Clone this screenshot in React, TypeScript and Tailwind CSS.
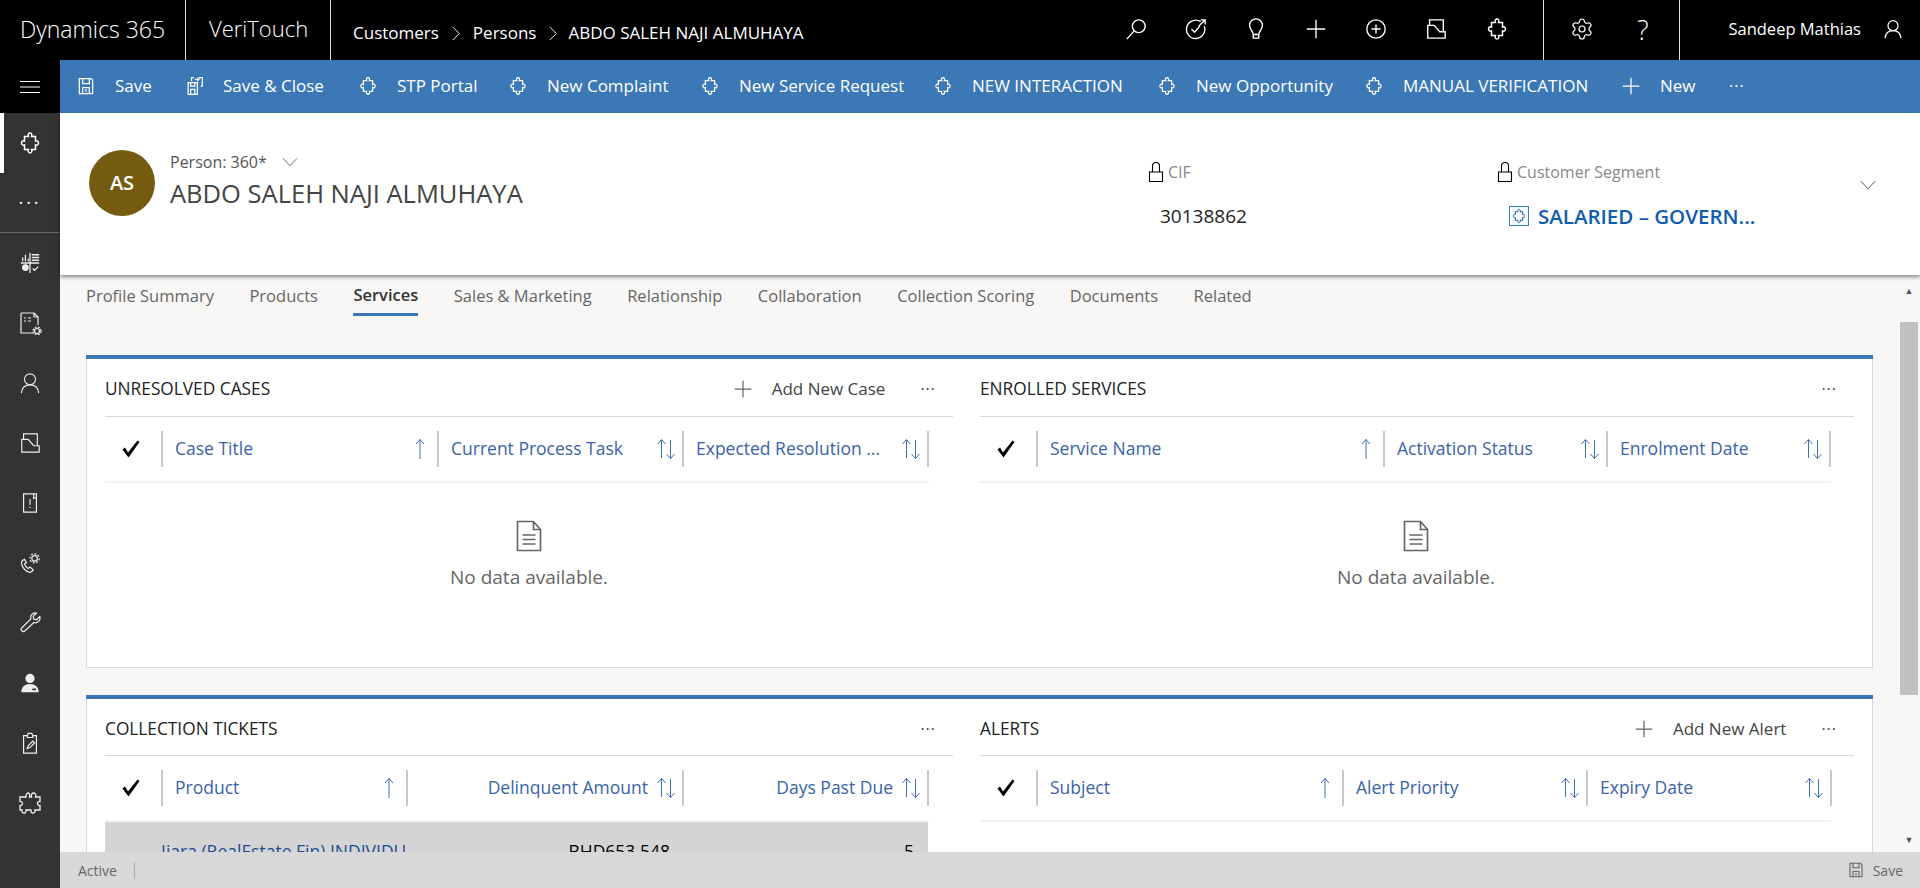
import React from 'react';
import { Settings } from 'lucide-react';

type IconProps = { className?: string };

function Svg({ className, box = '0 0 24 24', width = 1.5, children }: IconProps & { box?: string; width?: number; children: React.ReactNode }) {
  return (
    <svg viewBox={box} fill="none" stroke="currentColor" strokeWidth={width} className={className}>
      {children}
    </svg>
  );
}

const Puzzle = ({ className }: IconProps) => (
  <Svg className={className}>
    <path d="M10.400 5.500c-.8-2 .2-3.500 1.600-3.500s2.400 1.500 1.600 3.500h3.900V10c1.500-.8 3 .2 3 2s-1.500 2.800-3 2v4.500h-3.900c.8 2-.2 3.500-1.600 3.500s-2.400-1.500-1.600-3.500H6.500V14c-1.500.8-3-.2-3-2s1.500-2.800 3-2V5.500z" />
  </Svg>
);
const Save = ({ className }: IconProps) => (
  <Svg className={className}>
    <path d="M4 3h14l2 2v16H4zM8 3v6h8V3M8 21v-7h8v7M12 16v3" />
  </Svg>
);
const SaveClose = ({ className }: IconProps) => (
  <Svg className={className}>
    <path d="M5 8h11v14H5zM8 8v4h5V8M8 22v-6h5v6" />
    <path d="M9 6V2h3M20 12h2V2h-4M13 4h5M16 2l2 2-2 2" />
  </Svg>
);
const Folder = ({ className, width }: IconProps & { width?: number }) => (
  <Svg className={className} width={width}>
    <path d="M3 22V8h7l6 7h6v7zM5 8V2h15v13" />
  </Svg>
);
const PlusThin = ({ className }: IconProps) => (
  <Svg className={className}>
    <path d="M12 2v20M2 12h20" />
  </Svg>
);
const Chevron = ({ className }: IconProps) => (
  <Svg className={className} box="0 0 20 12" width={1}>
    <path d="M1.500 1.500 10 10.500l8.500-9" />
  </Svg>
);
const Crumb = () => (
  <svg viewBox="0 0 9 16" fill="none" stroke="currentColor" className="mx-[12px] h-[15px] w-[10px]">
    <path d="m1 1 7 7-7 7" />
  </svg>
);
const Lock = ({ className }: IconProps) => (
  <Svg className={className} box="0 0 16 22" width={1.1}>
    <path d="M1.500 11h13v9.500h-13zM4.500 11V5a3.500 3.500 0 0 1 7 0v6" />
  </Svg>
);
const Doc = ({ className }: IconProps) => (
  <Svg className={className} box="0 0 26 32" width={1.7}>
    <path d="M1.500 1.500h16l7 8v21h-23zM17.500 1.500v8h7M6.500 15h13M6.500 19.500h13M6.500 24h13" />
  </Svg>
);
const Check = ({ className }: IconProps) => (
  <svg viewBox="0 0 20 20" fill="currentColor" className={className}>
    <path d="M1.500 10.500 4 8.500l3 5L16.500 1.500l2 1.500L7.500 18.500z" />
  </svg>
);
const SortUp = () => (
  <svg viewBox="0 0 10 22" fill="none" stroke="#3f6fb0" className="h-[22px] w-[10px]">
    <path d="M5 21V1.500M1 6l4-4.500L9 6" />
  </svg>
);
const SortBoth = () => (
  <svg viewBox="0 0 20 22" fill="none" stroke="#3f6fb0" className="h-[22px] w-[20px]">
    <path d="M5.500 20V1.500M1.500 6l4-4.500 4 4.500M14.500 2v18.500M10.500 16l4 4.500 4-4.500" />
  </svg>
);
const User = ({ className, width }: IconProps & { width?: number }) => (
  <Svg className={className} width={width}>
    <circle cx="12" cy="8" r="6" />
    <path d="M2.500 23c.5-5.500 4-9 9.500-9s9 3.500 9.500 9" />
  </Svg>
);

const Hamburger = () => (
  <Svg className="h-[14px] w-[20px]" box="0 0 20 14" width={1.200}>
    <path d="M0 1.500h20M0 7h20M0 12.500h20" />
  </Svg>
);

const sideClass = 'h-[22px] w-[22px]';
const sideIcons: React.ReactNode[] = [
  <Svg key="a" className={sideClass} width={1.4}><path d="M2 12h20M12 1v22M4 10V6M7 10V3M10 10V7M14 3h8M14 6h8M14 9h8M15 18l2 2 4-4" /><circle cx="7" cy="17" r="3" fill="currentColor" /></Svg>,
  <Svg key="b" className="h-[24px] w-[24px]" width={1.2}><path d="M3 2h13l4 4v8M16 2v4h4M3 2v20h12M6 7h2M10 7h3M6 10h2M10 10h3" /><circle cx="19" cy="20" r="2.500" /><circle cx="19" cy="20" r="4" strokeDasharray="2 1.200" /></Svg>,
  <User key="c" className={sideClass} width={1.2} />,
  <Folder key="d" className={sideClass} width={1.3} />,
  <Svg key="e" className={sideClass} width={1.3}><path d="M5 2h14v20H5zM16 2v5l3-1M12 8v6M12 16v1.500" /></Svg>,
  <Svg key="f" className={sideClass} width={1.3}><path d="M6 8c-2.500 1-4 3-3 6 1.500 4 4.500 7 8 8 2 .5 3.500-.5 4.500-2.500l-3.500-3-2 1.500c-2-1-3.500-3-4-5l2-1.500z" /><circle cx="17" cy="7" r="3" /><circle cx="17" cy="7" r="5" strokeDasharray="2 1.800" /></Svg>,
  <Svg key="g" className={sideClass} width={1.3}><path d="M3 20.500c-1-1-1-2 0-3l10-10c-1-3 1-6.500 5-6.500l1 .3-3.500 3.500.7 3 3 .7 3.500-3.500c1.200 4-2.500 8-6.500 6.500L6 21c-1 1-2 .5-3-.5z" /></Svg>,
  <svg key="h" viewBox="0 0 24 24" fill="currentColor" className={sideClass}><circle cx="12" cy="7" r="5" /><path fillRule="evenodd" d="M2.500 22c0-6 4-9 9.500-9s9.500 3 9.500 9zM14.500 18v2h4v-2z" /></svg>,
  <Svg key="i" className={sideClass} width={1.3}><path d="M5 4h4l1-2.500h4L15 4h4v19H5zM9 4v2h6V4M9 18l1-3 5-5 2 2-5 5z" /></Svg>,
  <Svg key="j" className="h-[24px] w-[24px]" width={1.3}><path d="M8 6c-.5-3 1.500-4 2.500-4S12 3.500 11.500 6h2c-.5-2.500.500-4 2-4s3 1.500 2 4h4.500v4.500c-2-.5-2.500 1-2.500 2s1 2.500 2.500 2v4.500h-5c.5 1.500-.5 3-2 3s-2.500-1.500-2-3H8c.5 1.500-.5 3-2 3s-2.500-1.500-2-3H2v-4.500c1.500.5 2.500-1 2.500-2s-1-2.500-2.500-2V6z" /></Svg>,
];

const commands: { label: string; icon: 'save' | 'close' | 'puzzle' | 'plus'; width: string }[] = [
  { label: 'Save', icon: 'save', width: 'w-[35px]' },
  { label: 'Save & Close', icon: 'close', width: 'w-[101px]' },
  { label: 'STP Portal', icon: 'puzzle', width: 'w-[77px]' },
  { label: 'New Complaint', icon: 'puzzle', width: 'w-[119px]' },
  { label: 'New Service Request', icon: 'puzzle', width: 'w-[160px]' },
  { label: 'NEW INTERACTION', icon: 'puzzle', width: 'w-[151px]' },
  { label: 'New Opportunity', icon: 'puzzle', width: 'w-[134px]' },
  { label: 'MANUAL VERIFICATION', icon: 'puzzle', width: 'w-[184px]' },
  { label: 'New', icon: 'plus', width: 'w-[35px]' },
];

const tabs = ['Profile Summary', 'Products', 'Services', 'Sales & Marketing', 'Relationship', 'Collaboration', 'Collection Scoring', 'Documents', 'Related'];

type Col = { label: string; width: string; sort: 'up' | 'both'; right?: boolean };

function TableHead({ cols }: { cols: Col[] }) {
  return (
    <div className="flex h-9 w-max text-[17.5px]">
      <div className="flex w-[56px] items-center justify-center pr-[4px] text-black">
        <Check className="h-5 w-5" />
      </div>
      {cols.map((c, i) => (
        <div
          key={c.label}
          className={`flex items-center gap-2 border-l-2 border-[#c8c8c8] pl-[12px] pr-[6px] text-[#3a63a8] ${c.width} ${c.right ? 'justify-end' : 'justify-between'} ${i === cols.length - 1 ? 'border-r-2' : ''}`}
        >
          <span className="whitespace-nowrap pb-[2px]">{c.label}</span>
          {c.sort === 'up' ? <span className="mr-[6px] flex"><SortUp /></span> : <SortBoth />}
        </div>
      ))}
    </div>
  );
}

function Empty({ wide }: { wide?: boolean }) {
  return (
    <div className={`flex flex-col items-center pt-[37px] text-[#666] ${wide ? 'w-[872px]' : 'w-[848px]'}`}>
      <Doc className="h-[32px] w-[26px]" />
      <div className="mt-[13px] text-[19px] leading-6">No data available.</div>
    </div>
  );
}

function Section({
  title,
  action,
  cols,
  wide,
  compact,
  children,
}: {
  title: string;
  action?: string;
  cols: Col[];
  wide?: boolean;
  compact?: boolean;
  children?: React.ReactNode;
}) {
  return (
    <section>
      <div className={`flex items-center border-b-[1.500px] border-[#d8d8d8] pr-[17px] pt-[3px] ${compact ? 'h-[57px]' : 'h-[58px]'} ${wide ? 'w-[874px]' : 'w-[848px]'}`}>
        <h3 className="text-[17.300px] font-medium text-[#222]">{title}</h3>
        {action && (
          <button className="ml-auto flex items-center gap-[19px] text-[17px] text-[#444]">
            <PlusThin className="h-5 w-5 text-[#666]" />
            <span>{action}</span>
          </button>
        )}
        <span className={`${action ? 'ml-[35px]' : 'ml-auto'} text-[#444] leading-none tracking-[1px]`}>···</span>
      </div>
      <div className="pt-[14px]">
        <TableHead cols={cols} />
        <div className={`mt-[14px] h-[2px] bg-[#f3f3f3] ${wide ? 'w-[851px]' : 'w-[824px]'}`} />
        {children}
      </div>
    </section>
  );
}

function Card({ className, children }: { className?: string; children: React.ReactNode }) {
  return (
    <div className={`relative grid w-[1787px] grid-cols-[848px_874px] gap-x-[27px] border border-t-0 border-[#d8d8d8] bg-white pl-[18px] pt-[4px] ${className ?? ''}`}>
      <div className="absolute -left-px -right-px top-0 h-1 bg-[#3b78b5]" />
      {children}
    </div>
  );
}

export default function App() {
  return (
    <div className="flex h-[888px] w-[1920px] flex-col overflow-hidden bg-white font-['Open_Sans',sans-serif] text-[16px] text-[#333]">
      {/* top bar */}
      <header className="flex h-[60px] shrink-0 items-stretch bg-black text-white">
        <div className="flex w-[186px] items-center border-r border-[#ddd] pl-[20px] pb-[2px] text-[23px] font-light">Dynamics 365</div>
        <div className="flex w-[145px] items-center border-r border-[#ddd] pl-[23px] pb-[4px] text-[22px] font-light">VeriTouch</div>
        <nav className="flex items-center whitespace-nowrap pl-[22px] pt-[6px] text-[17px]">
          <span>Customers</span>
          <Crumb />
          <span>Persons</span>
          <Crumb />
          <span className="-ml-[2px]">ABDO SALEH NAJI ALMUHAYA</span>
        </nav>
        <div className="ml-auto flex items-center gap-[38px] pb-[2px]">
          <Svg className="h-[22px] w-[22px]"><circle cx="15" cy="9" r="7" /><path d="M10 14 2 23" /></Svg>
          <Svg className="h-[22px] w-[22px]"><path d="M17 4a10 10 0 1 0 4 5M15 9l7-7M17 2h5v5M7 12l3.500 3.500L16 9" /></Svg>
          <Svg className="h-[22px] w-[22px]"><path d="M9 18c0-4-4-5-4-10a7 7 0 0 1 14 0c0 5-4 6-4 10zM9 18v4h6v-4" /></Svg>
          <PlusThin className="h-[22px] w-[22px]" />
          <Svg className="h-[22px] w-[22px]"><circle cx="12" cy="12" r="10" /><path d="M12 7v10M7 12h10" /></Svg>
          <Folder className="h-[22px] w-[22px]" />
          <Puzzle className="h-[26px] w-[24px]" />
        </div>
        <div className="ml-[34px] flex w-[137px] items-center justify-center gap-[38px] border-x border-[#ddd] pb-[2px]">
          <Settings className="h-[24px] w-[24px]" strokeWidth={1.200} />
          <span className="w-[22px] text-center text-[27px] font-light leading-none">?</span>
        </div>
        <div className="flex items-center gap-[22px] pb-[2px] pl-[48px] pr-[17px]">
          <span className="whitespace-nowrap text-[16.500px]">Sandeep Mathias</span>
          <User className="h-[22px] w-[20px]" />
        </div>
      </header>

      <div className="flex min-h-0 flex-1">
        {/* left nav */}
        <aside className="flex w-[60px] shrink-0 flex-col bg-[#333] text-white">
          <div className="flex h-[53px] items-center justify-center bg-black"><Hamburger /></div>
          <div className="flex h-[60px] items-center justify-center border-l-4 border-white pr-1"><Puzzle className="h-[26px] w-[24px]" /></div>
          <div className="flex h-[60px] items-center justify-center border-b border-[#666] text-[18px] tracking-[3px]">···</div>
          {sideIcons.map((icon, i) => (
            <div key={i} className="flex h-[60px] shrink-0 items-center justify-center text-[#eee]">{icon}</div>
          ))}
        </aside>

        <div className="flex min-w-0 flex-1 flex-col">
          {/* command bar */}
          <div className="flex h-[53px] shrink-0 items-center gap-[34px] bg-[#3b78b5] pb-[1px] pl-[16px] text-[17px] text-white">
            {commands.map(c => (
              <button key={c.label} className="flex items-center gap-[19px]">
                {c.icon === 'save' && <Save className="h-5 w-5" />}
                {c.icon === 'close' && <SaveClose className="h-5 w-5" />}
                {c.icon === 'puzzle' && <Puzzle className="h-6 w-5" />}
                {c.icon === 'plus' && <PlusThin className="h-5 w-5" />}
                <span className={`whitespace-nowrap text-left ${c.width}`}>{c.label}</span>
              </button>
            ))}
            <span className="text-[16px] tracking-[1px]">···</span>
          </div>

          {/* record header */}
          <div className="relative z-10 flex h-[162px] shrink-0 items-start bg-white pl-[29px] pt-[37px] shadow-[0_2px_4px_rgba(0,0,0,0.45)]">
            <div className="flex h-[66px] w-[66px] items-center justify-center rounded-full bg-[#745b10] text-[20px] font-semibold text-white">AS</div>
            <div className="ml-[15px] w-[978px]">
              <div className="flex items-center gap-[14px] text-[16px] leading-6 text-[#555]">
                <span>Person: 360*</span>
                <Chevron className="h-[10px] w-[18px]" />
              </div>
              <div className="mt-[3px] text-[25.500px] leading-8 text-[#444]">ABDO SALEH NAJI ALMUHAYA</div>
            </div>
            <div className="w-[349px] pt-[10px]">
              <div className="flex items-center gap-[4px] leading-6 text-[#888]">
                <Lock className="h-[22px] w-4 text-black" />
                <span>CIF</span>
              </div>
              <div className="mt-[20px] pl-[12px] text-[19px] leading-6 text-[#222]">30138862</div>
            </div>
            <div className="w-[362px] pt-[10px]">
              <div className="flex items-center gap-[4px] leading-6 text-[#888]">
                <Lock className="h-[22px] w-4 text-black" />
                <span className="whitespace-nowrap">Customer Segment</span>
              </div>
              <div className="mt-[18px] flex items-center gap-[9px] pl-[12px] text-[20.500px] font-semibold leading-7 text-[#0f5cb0]">
                <span className="flex h-[20px] w-[20px] items-center justify-center border border-[#2b7cd3]">
                  <Puzzle className="h-4 w-4" />
                </span>
                <span className="whitespace-nowrap">SALARIED – GOVERN...</span>
              </div>
            </div>
            <Chevron className="mt-[30px] h-[10px] w-[18px] text-[#333]" />
          </div>

          <div className="flex min-h-0 flex-1">
            {/* page body */}
            <main className="min-w-0 flex-1 overflow-hidden bg-[#f8f7f6] pl-[26px]">
              <div className="flex h-[80px] items-start gap-[35.500px] pt-[6px] text-[16.500px] text-[#666]">
                {tabs.map(t => (
                  <div
                    key={t}
                    className={`flex h-[35px] items-center whitespace-nowrap pb-[4px] ${t === 'Services' ? 'border-b-[3px] border-[#3b78b5] font-semibold text-[#333]' : ''}`}
                  >
                    {t}
                  </div>
                ))}
              </div>
              <Card className="h-[313px]">
                <Section
                  title="UNRESOLVED CASES"
                  action="Add New Case"
                  cols={[
                    { label: 'Case Title', width: 'w-[276px]', sort: 'up' },
                    { label: 'Current Process Task', width: 'w-[245px]', sort: 'both' },
                    { label: 'Expected Resolution ...', width: 'w-[247px]', sort: 'both' },
                  ]}
                >
                  <Empty />
                </Section>
                <Section
                  title="ENROLLED SERVICES"
                  wide
                  cols={[
                    { label: 'Service Name', width: 'w-[347px]', sort: 'up' },
                    { label: 'Activation Status', width: 'w-[223px]', sort: 'both' },
                    { label: 'Enrolment Date', width: 'w-[225px]', sort: 'both' },
                  ]}
                >
                  <Empty wide />
                </Section>
              </Card>
              <Card className="mt-[27px]">
                <Section
                  title="COLLECTION TICKETS"
                  compact
                  cols={[
                    { label: 'Product', width: 'w-[245px]', sort: 'up' },
                    { label: 'Delinquent Amount', width: 'w-[276px]', sort: 'both', right: true },
                    { label: 'Days Past Due', width: 'w-[247px]', sort: 'both', right: true },
                  ]}
                >
                  <div className="flex h-[58px] w-[823px] items-center bg-[#d4d4d4] text-[17.500px]">
                    <div className="w-[56px]" />
                    <div className="w-[245px] overflow-hidden whitespace-nowrap text-[#1f4e8f]">Ijara (RealEstate Fin) INDIVIDUAL</div>
                    <div className="w-[276px] pr-[12px] text-right text-black">BHD653.548</div>
                    <div className="w-[246px] pr-[14px] text-right text-black">5</div>
                  </div>
                </Section>
                <Section
                  title="ALERTS"
                  action="Add New Alert"
                  wide
                  compact
                  cols={[
                    { label: 'Subject', width: 'w-[306px]', sort: 'up' },
                    { label: 'Alert Priority', width: 'w-[244px]', sort: 'both' },
                    { label: 'Expiry Date', width: 'w-[246px]', sort: 'both' },
                  ]}
                />
              </Card>
            </main>

            {/* scrollbar */}
            <div className="flex w-[20px] shrink-0 flex-col items-center bg-[#f8f7f6] pr-[2px] text-[9px] leading-none text-[#555]">
              <div className="h-[47px] pt-[11px]">▲</div>
              <div className="h-[373px] w-[18px] shrink-0 bg-[#c1c1c1]" />
              <div className="mt-auto pb-[8px]">▼</div>
            </div>
          </div>

          {/* status bar */}
          <footer className="flex h-[36px] shrink-0 items-center bg-[#d8d8d8] pl-[18px] pr-[17px] text-[14px] text-[#666]">
            <span>Active</span>
            <span className="ml-[17px] h-[17px] w-px bg-[#aaa]" />
            <Save className="ml-auto h-[18px] w-[18px]" />
            <span className="ml-[8px]">Save</span>
          </footer>
        </div>
      </div>
    </div>
  );
}
